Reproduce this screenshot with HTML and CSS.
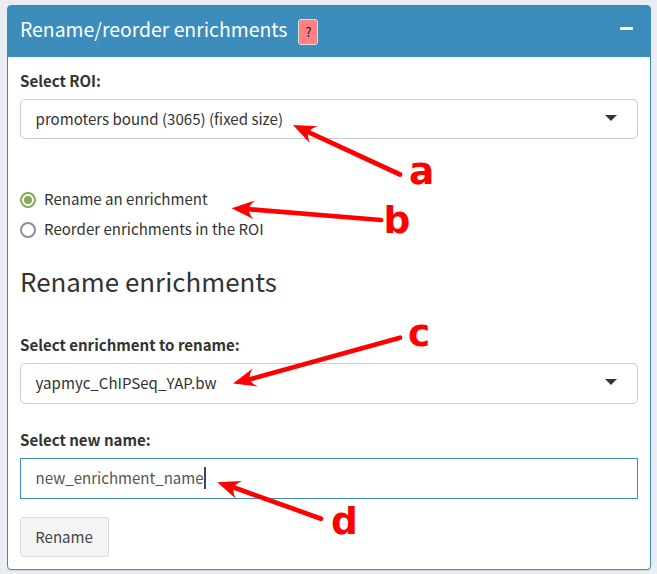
FILE: index.html
```html
<!DOCTYPE html>
<html lang="en">
<head>
<meta charset="utf-8">
<title>Rename/reorder enrichments</title>
<link rel="stylesheet" href="styles.css">
</head>
<body>
<section class="box">
  <header class="box-header">
    <h3 class="box-title">Rename/reorder enrichments</h3>
    <button class="help" type="button">?</button>
    <button class="collapse" type="button" aria-label="Collapse"><span class="minus"></span></button>
  </header>
  <div class="box-body">
    <div class="label">Select ROI:</div>
    <div class="select"><span>promoters bound (3065) (fixed size)</span><span class="caret"></span></div>
    <div class="radios">
      <div class="radio"><span class="dot checked"></span><span class="text">Rename an enrichment</span></div>
      <div class="radio"><span class="dot"></span><span class="text">Reorder enrichments in the ROI</span></div>
    </div>
    <h2 class="heading">Rename enrichments</h2>
    <div class="label">Select enrichment to rename:</div>
    <div class="select select-enrichment"><span>yapmyc_ChIPSeq_YAP.bw</span><span class="caret"></span></div>
    <div class="label">Select new name:</div>
    <div class="input"><span class="value">new_enrichment_name</span><span class="cursor"></span></div>
    <button class="btn" type="button">Rename</button>
  </div>
</section>
<svg class="notes" width="657" height="574" viewBox="0 0 657 574">
  <defs>
    <path id="head" d="M0 0 L23 -9.3 Q17.5 -4.5 17.5 0 Q17.5 4.5 23 9.3 Z"/>
  </defs>
  <g class="shafts">
    <path d="M310 132.8 L400 174.5"/>
    <path d="M250 209.3 L381 220"/>
    <path d="M251 379 L400 337.7"/>
    <path d="M234 487.5 L321 518.7"/>
  </g>
  <use href="#head" transform="translate(293 125) rotate(25)"/>
  <use href="#head" transform="translate(231.5 208.2) rotate(4.2)"/>
  <use href="#head" transform="translate(233 383.5) rotate(-15.3)"/>
  <use href="#head" transform="translate(217.3 482.3) rotate(19.3)"/>
  <text x="409" y="184">a</text>
  <text x="383.5" y="233">b</text>
  <text x="408" y="346">c</text>
  <text x="331" y="534">d</text>
</svg>
</body>
</html>
```
FILE: styles.css
```css
* { box-sizing: border-box; }
body {
  margin: 0;
  padding: 5px 6px 4px 7px;
  height: 574px;
  overflow: hidden;
  position: relative;
  background: #eaeef3;
  color: #333;
  font: 15.07px/20px "Noto Sans CJK SC", "Open Sans", sans-serif;
}
span { white-space: nowrap; }
button { font: inherit; padding: 0; }
.box {
  height: 565px;
  background: #fff;
  border: 1px solid #3c8dbc;
  border-radius: 4px;
  box-shadow: 0 1px 1px rgba(0, 0, 0, .1);
}
.box-header {
  height: 51px;
  display: flex;
  align-items: center;
  padding: 0 16px 0 12px;
  background: #3c8dbc;
  color: #fff;
}
.box-title { margin: 0 11px 6px 0; font-size: 19.4px; line-height: 26px; font-weight: 400; white-space: nowrap; }
.help {
  width: 20px;
  height: 26px;
  margin-top: 1px;
  border: 1px solid #ddd;
  border-radius: 3px;
  background: #ff8080;
  color: #111;
  font-size: 12.5px;
}
.collapse { margin-left: auto; border: 0; background: none; display: flex; padding: 0 1.5px 7px; }
.minus { width: 13px; height: 3px; border-radius: 1px; background: #fff; }
.box-body { padding: 14px 12px 0; }
.label { height: 28px; font-weight: 700; }
.select, .input {
  display: flex;
  align-items: center;
  height: 40px;
  padding: 0 20px 0 14.6px;
  border: 1px solid #ccc;
  border-radius: 5px;
}
.caret { margin: -3px 0 0 auto; border: 6px solid transparent; border-top-color: #333; border-bottom: 0; }
.select-enrichment { height: 41px; padding-bottom: 2px; margin-bottom: 26px; }
.select-enrichment .caret { margin-top: -1px; }
.radios { margin-top: 46px; }
.radio { display: flex; align-items: center; height: 30px; gap: 8px; }
.radio .text { padding-bottom: 2px; }
.dot { width: 16px; height: 16px; border: 2px solid #8e8c9c; border-radius: 50%; }
.dot.checked { border-color: #86aa55; background: radial-gradient(circle, #86aa55 3.7px, #fff 4.4px); }
.heading { margin: 18px 0 36px; font-size: 25.9px; line-height: 36px; font-weight: 400; }
.input { height: 41px; padding-bottom: 0; border-color: #3c8dbc; border-radius: 0; color: #555; }
.value { padding-bottom: 2px; }
.cursor { width: 2px; height: 22px; margin-top: -1px; background: #444; }
.btn {
  display: block;
  width: 89px;
  height: 40px;
  margin-top: 18px;
  padding: 0 1px 1px 0;
  border: 1px solid #ddd;
  border-radius: 3px;
  background: #f4f4f4;
  color: #444;
}
.notes { position: absolute; left: 0; top: 0; fill: #f00; }
.shafts { stroke: #f00; stroke-width: 4.7; stroke-linecap: round; }
.notes text { font: 700 37.5px "DejaVu Sans", sans-serif; }
```
